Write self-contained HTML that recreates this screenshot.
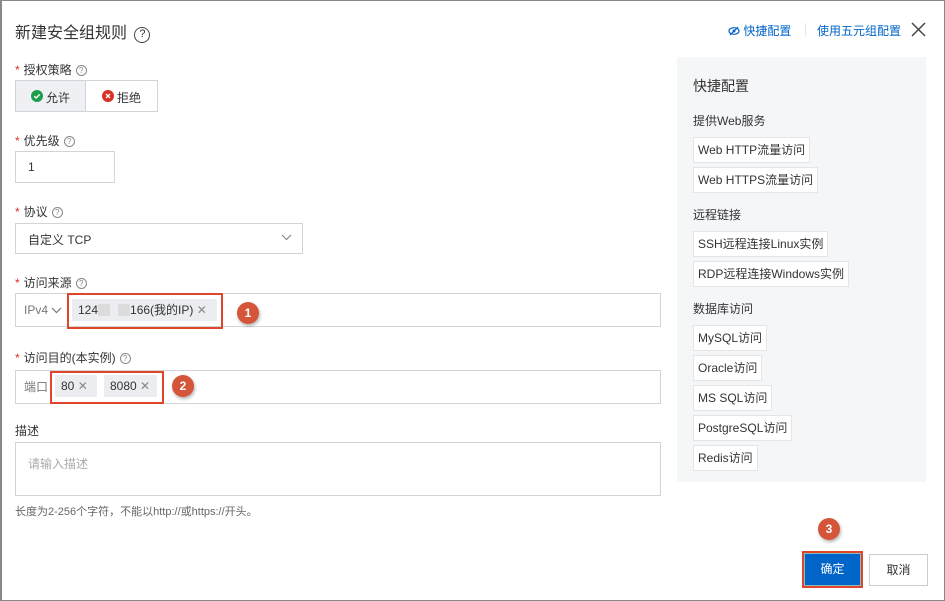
<!DOCTYPE html>
<html><head><meta charset="utf-8"><style>
*{box-sizing:border-box;margin:0;padding:0}
body{width:945px;height:601px;background:#fff;font-family:"Liberation Sans","Noto Sans CJK SC",sans-serif;font-size:12px;color:#333;position:relative;overflow:hidden}
.frame{position:absolute;left:0;top:0;width:945px;height:601px;border:1px solid #888;border-left-width:2px}
.a{position:absolute;white-space:nowrap}
.lbl{position:absolute;left:15px;font-size:12px;color:#333}
.lbl b{color:#d93026;font-weight:normal;margin-right:4px}
.q{display:inline-block;width:11px;height:11px;border:1px solid #888;border-radius:50%;font-size:8px;line-height:9px;text-align:center;color:#888;margin-left:4px;vertical-align:1px}
.box{position:absolute;border:1px solid #d1d5d9;background:#fff}
.tag{position:absolute;background:#ebedf0;height:22px;line-height:22px;padding:0 6px;font-size:12px;color:#333;white-space:nowrap}
.red{position:absolute;border:2px solid #e0452a}
.badge{position:absolute;width:22px;height:22px;border-radius:50%;background:#d4553a;color:#fff;font-size:12px;font-weight:bold;text-align:center;line-height:22px;box-shadow:1px 2px 3px rgba(0,0,0,.3)}
.qt{position:absolute;left:693px;height:26px;line-height:24px;padding:0 4px;border:1px solid #e3e5e8;background:#fff;font-size:12px;color:#333;white-space:nowrap}
.sec{position:absolute;left:693px;font-size:12px;color:#333}
</style></head><body>
<div class="frame"></div>
<div class="a" style="left:15px;top:19px;font-size:16px;color:#333">新建安全组规则 <span style="display:inline-block;width:16px;height:16px;border:1.5px solid #444;border-radius:50%;font-size:11px;line-height:13px;text-align:center;vertical-align:1px;margin-left:3px">?</span></div>
<div class="a" style="left:728px;top:22px;color:#0064c8;font-size:12px"><svg width="12" height="10" viewBox="0 0 12 10" style="vertical-align:-1px"><ellipse cx="6" cy="5" rx="5" ry="3.3" fill="none" stroke="#0064c8" stroke-width="1.2"/><circle cx="6" cy="5" r="1.5" fill="#0064c8"/><line x1="2" y1="9" x2="10" y2="1" stroke="#0064c8" stroke-width="1.2"/></svg> 快捷配置</div>
<div class="a" style="left:805px;top:23px;width:1px;height:13px;background:#e3e5e8"></div>
<div class="a" style="left:817px;top:22px;color:#0064c8;font-size:12px">使用五元组配置</div>
<svg class="a" style="left:911px;top:22px" width="15" height="15" viewBox="0 0 15 15"><path d="M1 1L14 14M14 1L1 14" stroke="#444" stroke-width="1.5"/></svg>

<div class="lbl" style="top:61px"><b>*</b>授权策略<span class="q">?</span></div>
<div class="box" style="left:15px;top:80px;width:143px;height:32px"></div>
<div class="a" style="left:16px;top:81px;width:70px;height:30px;background:#eef0f4;border-right:1px solid #d1d5d9"></div>
<svg class="a" style="left:31px;top:90px" width="12" height="12" viewBox="0 0 12 12"><circle cx="6" cy="6" r="6" fill="#1e9e4a"/><path d="M3.3 6.2L5.2 8L8.7 4.3" fill="none" stroke="#fff" stroke-width="1.4"/></svg>
<div class="a" style="left:46px;top:89px">允许</div>
<svg class="a" style="left:102px;top:90px" width="12" height="12" viewBox="0 0 12 12"><circle cx="6" cy="6" r="6" fill="#d93026"/><path d="M4 4L8 8M8 4L4 8" stroke="#fff" stroke-width="1.4"/></svg>
<div class="a" style="left:117px;top:89px">拒绝</div>

<div class="lbl" style="top:132px"><b>*</b>优先级<span class="q">?</span></div>
<div class="box" style="left:15px;top:151px;width:100px;height:32px"></div>
<div class="a" style="left:28px;top:160px">1</div>

<div class="lbl" style="top:203px"><b>*</b>协议<span class="q">?</span></div>
<div class="box" style="left:15px;top:223px;width:288px;height:31px"></div>
<div class="a" style="left:28px;top:231px">自定义 TCP</div>
<svg class="a" style="left:281px;top:234px" width="11" height="7" viewBox="0 0 11 7"><path d="M1 1L5.5 5.5L10 1" fill="none" stroke="#888" stroke-width="1.2"/></svg>

<div class="lbl" style="top:274px"><b>*</b>访问来源<span class="q">?</span></div>
<div class="box" style="left:15px;top:293px;width:646px;height:34px"></div>
<div class="a" style="left:24px;top:303px;color:#777">IPv4 <svg width="11" height="7" viewBox="0 0 11 7"><path d="M1 1L5.5 5.5L10 1" fill="none" stroke="#777" stroke-width="1.2"/></svg></div>
<div class="tag" style="left:72px;top:299px;width:145px">124<span style="display:inline-block;width:12px;height:12px;background:#dcdcdc;vertical-align:-2px"></span><span style="display:inline-block;width:8px"></span><span style="display:inline-block;width:12px;height:12px;background:#dcdcdc;vertical-align:-2px"></span>166(我的IP) <span style="color:#888">✕</span></div>
<div class="red" style="left:67px;top:293px;width:156px;height:36px"></div>
<div class="badge" style="left:237px;top:302px">1</div>

<div class="lbl" style="top:349px"><b>*</b>访问目的(本实例)<span class="q">?</span></div>
<div class="box" style="left:15px;top:370px;width:646px;height:34px"></div>
<div class="a" style="left:24px;top:378px;color:#777">端口</div>
<div class="tag" style="left:55px;top:375px;width:42px">80 <span style="color:#888">✕</span></div>
<div class="tag" style="left:104px;top:375px;width:53px">8080 <span style="color:#888">✕</span></div>
<div class="red" style="left:50px;top:371px;width:114px;height:33px"></div>
<div class="badge" style="left:172px;top:375px">2</div>

<div class="lbl" style="top:422px">描述</div>
<div class="box" style="left:15px;top:442px;width:646px;height:54px"></div>
<div class="a" style="left:28px;top:455px;color:#aaa">请输入描述</div>
<div class="a" style="left:15px;top:503px;color:#666;font-size:11px">长度为2-256个字符，不能以http://或https://开头。</div>

<div class="a" style="left:677px;top:57px;width:249px;height:425px;background:#f5f6f8"></div>
<div class="a" style="left:693px;top:76px;font-size:14px;color:#333">快捷配置</div>
<div class="sec" style="top:112px">提供Web服务</div>
<div class="qt" style="top:137px">Web HTTP流量访问</div>
<div class="qt" style="top:167px">Web HTTPS流量访问</div>
<div class="sec" style="top:206px">远程链接</div>
<div class="qt" style="top:231px">SSH远程连接Linux实例</div>
<div class="qt" style="top:261px">RDP远程连接Windows实例</div>
<div class="sec" style="top:300px">数据库访问</div>
<div class="qt" style="top:325px">MySQL访问</div>
<div class="qt" style="top:355px">Oracle访问</div>
<div class="qt" style="top:385px">MS SQL访问</div>
<div class="qt" style="top:415px">PostgreSQL访问</div>
<div class="qt" style="top:445px">Redis访问</div>

<div class="badge" style="left:818px;top:518px">3</div>
<div class="a" style="left:802px;top:551px;width:61px;height:37px;border:2px solid #e0452a;background:#0064c8;color:#fff;text-align:center;line-height:33px;box-shadow:inset 0 0 0 1px #8bb">确定</div>
<div class="a" style="left:869px;top:554px;width:59px;height:32px;border:1px solid #c9cdd2;text-align:center;line-height:30px">取消</div>
</body></html>
